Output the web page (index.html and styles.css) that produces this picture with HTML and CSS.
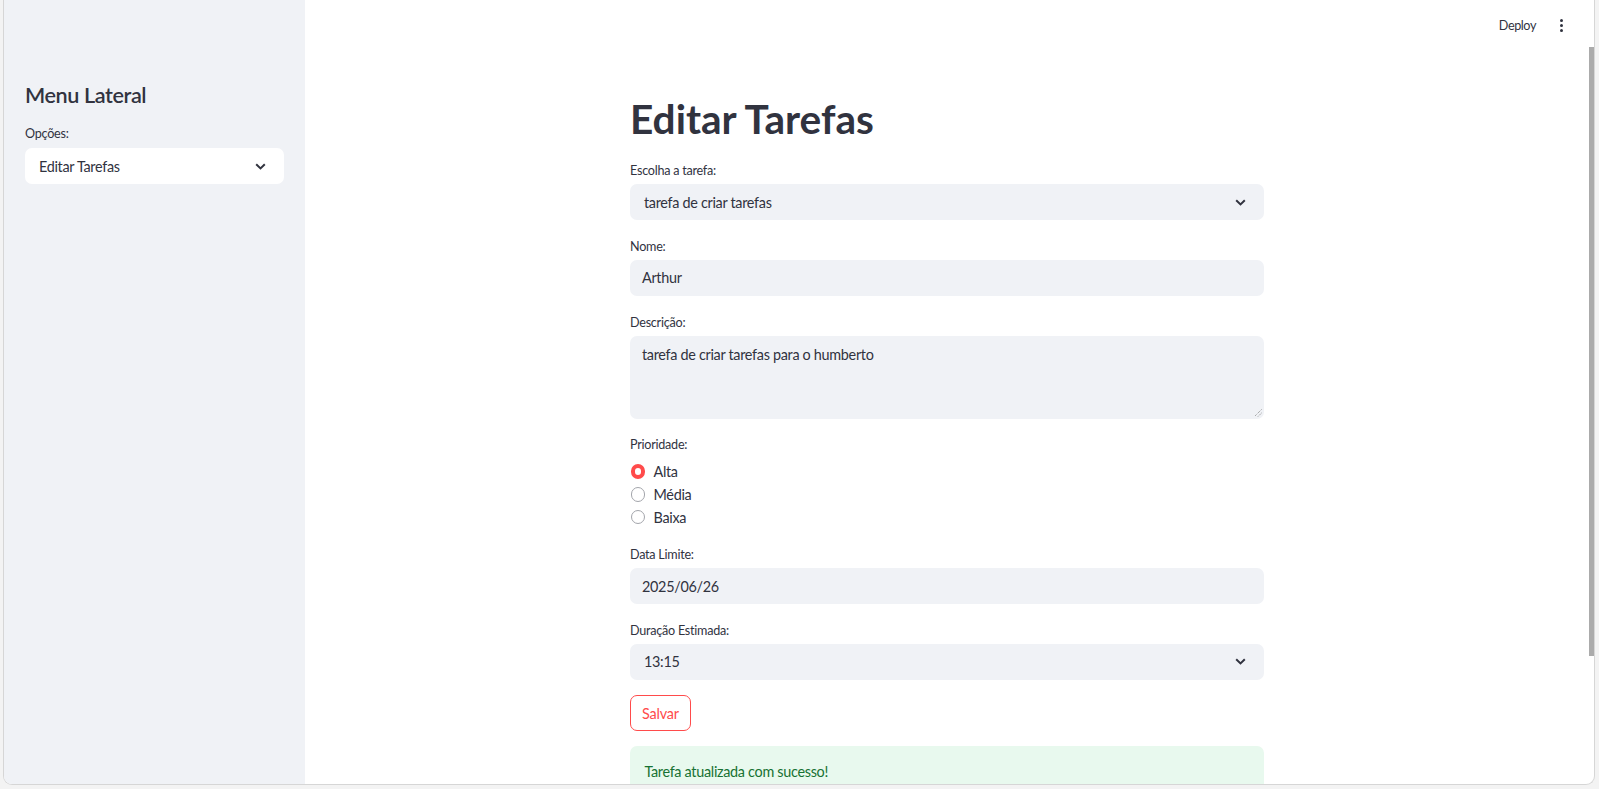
FILE: index.html
```html
<!DOCTYPE html>
<html lang="pt">
<head>
<meta charset="utf-8">
<title>Editar Tarefas</title>
<link rel="stylesheet" href="styles.css">
</head>
<body>
<div class="frame">
  <aside class="sidebar">
    <h2 class="side-title">Menu Lateral</h2>
    <div class="field">
      <div class="label">Opções:</div>
      <div class="select white">
        <span>Editar Tarefas</span>
        <svg class="chev" width="11" height="7" viewBox="0 0 11 7"><path d="M1.2 1.2 L5.5 5.4 L9.8 1.2" fill="none" stroke="#31333f" stroke-width="2"/></svg>
      </div>
    </div>
  </aside>
  <main class="main">
    <header class="topbar">
      <span class="deploy">Deploy</span>
      <span class="kebab"><i></i><i></i><i></i></span>
    </header>
    <section class="content">
      <h1 class="title">Editar Tarefas</h1>
      <div class="field">
        <div class="label">Escolha a tarefa:</div>
        <div class="select">
          <span>tarefa de criar tarefas</span>
          <svg class="chev" width="11" height="7" viewBox="0 0 11 7"><path d="M1.2 1.2 L5.5 5.4 L9.8 1.2" fill="none" stroke="#31333f" stroke-width="2"/></svg>
        </div>
      </div>
      <div class="field">
        <div class="label">Nome:</div>
        <div class="input">Arthur</div>
      </div>
      <div class="field">
        <div class="label">Descrição:</div>
        <div class="input textarea">tarefa de criar tarefas para o humberto
          <svg class="grip" width="8" height="8" viewBox="0 0 8 8"><path d="M7.5 0.5 L0.5 7.5 M7.5 4 L4 7.5" stroke="#888" stroke-width="1" stroke-dasharray="1 1"/></svg>
        </div>
      </div>
      <div class="field">
        <div class="label">Prioridade:</div>
        <div class="radios">
          <div class="radio"><span class="dot on"></span><span>Alta</span></div>
          <div class="radio"><span class="dot"></span><span>Média</span></div>
          <div class="radio"><span class="dot"></span><span>Baixa</span></div>
        </div>
      </div>
      <div class="field">
        <div class="label">Data Limite:</div>
        <div class="input">2025/06/26</div>
      </div>
      <div class="field">
        <div class="label">Duração Estimada:</div>
        <div class="select">
          <span>13:15</span>
          <svg class="chev" width="11" height="7" viewBox="0 0 11 7"><path d="M1.2 1.2 L5.5 5.4 L9.8 1.2" fill="none" stroke="#31333f" stroke-width="2"/></svg>
        </div>
      </div>
      <div class="field">
        <button class="btn">Salvar</button>
      </div>
      <div class="alert">Tarefa atualizada com sucesso!</div>
    </section>
    <div class="scrollthumb"></div>
  </main>
</div>
</body>
</html>
```
FILE: styles.css
```css
* { box-sizing: border-box; }
html, body { margin: 0; height: 100%; }
body {
  background: #f3f3f3;
  font-family: Lato, "Noto Sans", sans-serif;
  color: #31333f;
  overflow: hidden;
}
.frame {
  margin-left: 3px;
  width: 1592px;
  height: 785px;
  border: 1px solid #d6d6d6;
  border-top: none;
  border-radius: 0 0 9px 9px;
  overflow: hidden;
  display: flex;
  background: #fff;
}
.sidebar {
  width: 301px;
  flex: none;
  background: #f0f2f6;
  padding: 83px 21px 0 21px;
}
.side-title {
  margin: 0 0 14px 0;
  font-size: 21.6px;
  font-weight: 600;
  line-height: 1.2;
  letter-spacing: -0.4px;
}
.main {
  flex: 1;
  position: relative;
  padding-right: 5px;
}
.topbar {
  height: 50px;
  display: flex;
  justify-content: flex-end;
  align-items: center;
  padding-right: 26px;
  gap: 24px;
}
.deploy { font-size: 12.6px; letter-spacing: -0.4px; }
.kebab { display: flex; flex-direction: column; gap: 2px; }
.kebab i { width: 3px; height: 3px; background: #31333f; border-radius: 50%; display: block; }
.content {
  width: 634px;
  margin: 0 auto;
  display: flex;
  flex-direction: column;
  gap: 15.6px;
}
.title {
  margin: 0;
  padding: 45px 0 1.8px;
  font-size: 40.6px;
  font-weight: 700;
  line-height: 48px;
  letter-spacing: 0;
}
.field { display: flex; flex-direction: column; }
.label {
  font-size: 12.6px;
  height: 21.6px;
  line-height: 21.6px;
  margin-bottom: 2.4px;
  letter-spacing: -0.25px;
}
.select, .input {
  height: 36px;
  background: #f0f2f6;
  border-radius: 7px;
  display: flex;
  align-items: center;
  font-size: 14.4px;
  letter-spacing: -0.3px;
}
.sidebar .label { margin-bottom: 3.6px; }
.select { padding: 0 18px 0 14px; justify-content: space-between; }
.select.white { background: #fff; }
.input { padding: 0 12px; }
.textarea {
  height: 83px;
  align-items: flex-start;
  padding-top: 10px;
  position: relative;
}
.grip { position: absolute; right: 2px; bottom: 2px; }
.radios { display: flex; flex-direction: column; padding-top: 2px; }
.radio {
  height: 22.8px;
  display: flex;
  align-items: center;
  gap: 8.5px;
  font-size: 14.4px;
  letter-spacing: -0.3px;
}
.dot {
  width: 14.5px;
  height: 14.5px;
  margin-left: 0.5px;
  border-radius: 50%;
  border: 1px solid #a3a5ab;
  background: #fff;
}
.dot.on { border: 4.5px solid #ff4b4b; }
.btn {
  align-self: flex-start;
  height: 35.5px;
  padding: 0 11px;
  border: 1px solid #ff4b4b;
  border-radius: 7px;
  background: #fff;
  color: #ff4b4b;
  font-family: inherit;
  font-size: 14.4px;
  letter-spacing: -0.2px;
}
.alert {
  background: #e8f9ee;
  color: #177233;
  border-radius: 7px;
  padding: 14.4px 14.4px;
  font-size: 14.4px;
  line-height: 21px;
  height: 60px;
  letter-spacing: -0.3px;
}
.scrollthumb {
  position: absolute;
  right: 0;
  top: 47px;
  width: 5px;
  height: 609px;
  background: #ababab;
}
```
